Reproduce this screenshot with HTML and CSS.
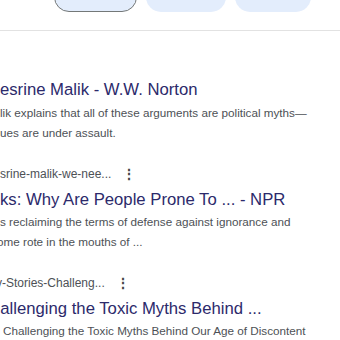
FILE: index.html
```html
<!DOCTYPE html>
<html lang="en">
<head>
    <meta charset="UTF-8">
    <title>Search results</title>
    <link rel="stylesheet" href="styles.css">
</head>
<body>
<div class="chips">
    <div class="chip chip-active"></div>
    <div class="chip chip-second"></div>
    <div class="chip chip-third"></div>
</div>
<div class="divider"></div>
<div class="results">
    <div class="result">
        <div class="result-title">esrine Malik - W.W. Norton</div>
        <div class="result-snippet">
            <div>lik explains that all of these arguments are political myths—</div>
            <div>ues are under assault.</div>
        </div>
    </div>
    <div class="result">
        <div class="result-url">
            <span class="url-text">srine-malik-we-nee...</span>
            <span class="more">&#8942;</span>
        </div>
        <div class="result-title">ks: Why Are People Prone To ... - NPR</div>
        <div class="result-snippet">
            <div>s reclaiming the terms of defense against ignorance and</div>
            <div class="cut">ome rote in the mouths of ...</div>
        </div>
    </div>
    <div class="result">
        <div class="result-url">
            <span class="url-text cut-url">y-Stories-Challeng...</span>
            <span class="more">&#8942;</span>
        </div>
        <div class="result-title cut-title">hallenging the Toxic Myths Behind ...</div>
        <div class="result-snippet">
            <div class="indent">Challenging the Toxic Myths Behind Our Age of Discontent</div>
        </div>
    </div>
</div>
</body>
</html>
```

FILE: styles.css
```css
body {
    margin: 0;
    background-color: #fff;
    font-family: 'Liberation Sans', Arial, sans-serif;
    overflow: hidden;
}

.chips {
    display: flex;
    gap: 9px;
    padding-left: 54px;
    margin-top: -20px;
}

.chip {
    height: 32px;
    border-radius: 15px;
    background-color: #e3edfc;
    box-sizing: border-box;
}

.chip-active {
    width: 83px;
    border: 1px solid #747878;
}

.chip-second {
    width: 80px;
}

.chip-third {
    width: 76px;
}

.divider {
    height: 1px;
    background-color: #e2e2e2;
    margin-top: 18px;
}

.results {
    display: flex;
    flex-direction: column;
    gap: 22px;
    padding-top: 46px;
}

.result-url {
    display: flex;
    align-items: center;
    font-size: 12px;
    line-height: 18px;
    color: #4d5156;
}

.more {
    margin-left: 11px;
    font-size: 14px;
    color: #444;
    font-weight: bold;
}

.result-title {
    font-size: 16.7px;
    line-height: 26px;
    color: #2c2a6b;
    white-space: nowrap;
    margin-top: 4px;
}

.result:first-child .result-title {
    margin-top: 0;
}

.result-snippet {
    font-size: 11.7px;
    line-height: 20px;
    color: #4d5156;
    white-space: nowrap;
    margin-top: -1px;
}

.result:first-child .result-snippet {
    margin-top: 0;
}

.cut {
    margin-left: -3px;
}

.cut-url {
    margin-left: -4px;
}

.cut-title {
    margin-left: -9px;
}

.indent {
    margin-left: 3px;
}
```
